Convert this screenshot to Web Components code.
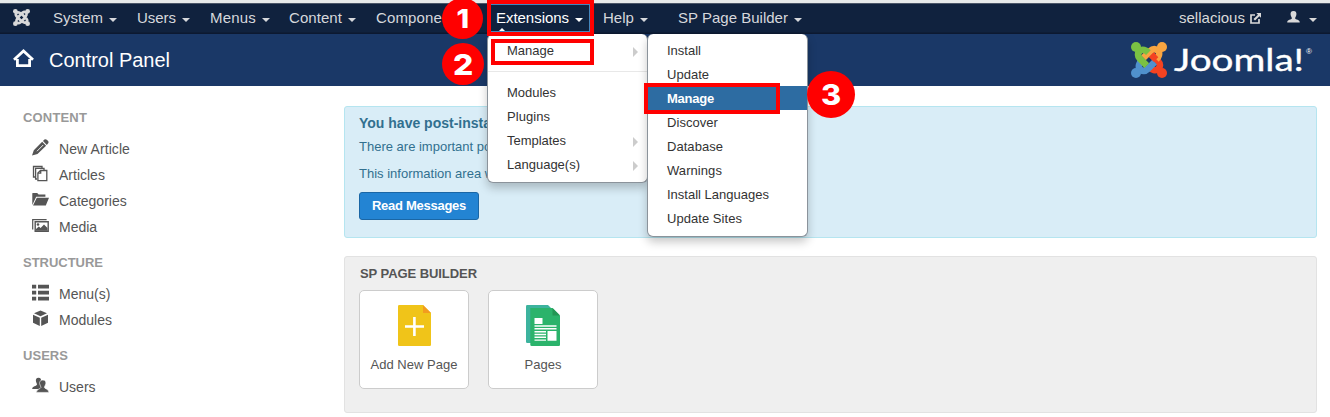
<!DOCTYPE html>
<html lang="en"><head><meta charset="utf-8"><title>Control Panel</title>
<style>html,body{margin:0;height:417px;overflow:hidden;background:#fff;font-family:"Liberation Sans",Arial,sans-serif}</style></head>
<body><control-panel></control-panel>
<script>
const define=(name,html,setup)=>customElements.define(name,class extends HTMLElement{
  connectedCallback(){
    if(this.shadowRoot)return;
    this.attachShadow({mode:'open'}).innerHTML=html;
    if(setup)setup(this,this.shadowRoot);
  }
});

// Spreads a label's letters over the width in its w attribute.
define('fit-text','<style>:host{display:inline-block;white-space:nowrap;flex:none}</style><slot></slot>',el=>{
  const w=+el.getAttribute('w');
  if(!w)return;
  el.style.letterSpacing=(w-el.getBoundingClientRect().width)/el.textContent.length+'px';
});

const hook='<path fill="none" stroke-width="6.6" d="M17.4 10.6C15 8.2 11.4 6.8 8.8 8.8C6.4 11.4 6.4 14.2 8.8 16.6L15.8 23.6"/><circle cx="5" cy="5" r="5" stroke="none"/>';
const mark=(c)=>[2,3,1,0].map(i=>`<g stroke="${c[i]}" fill="${c[i]}" transform="rotate(${i*90} 18 18)">${hook}</g>`).join('')+
  `<path d="M20.4 12.9L25 17.5" stroke="${c[2]}" stroke-width="6.6"/>`;
const glyphs={
  joomla:['0 0 36 36',mark(['#7ac143','#f9a541','#f44321','#5091cd'])],
  mini:['0 0 36 36','<g fill="none" stroke="currentColor" stroke-width="5.6"><path d="M17.5 11.2C15 7.6 10 5.8 7.4 8.4C5 11 5.6 13.4 8 15.9L20 28M24.8 17.5C28.4 15 30.2 10 27.6 7.4C25 5 22.6 5.6 20.1 8L8 20M18.5 24.8C21 28.4 26 30.2 28.6 27.6C31 25 30.4 22.6 28 20.1L16 8M11.2 18.5C7.6 21 5.8 26 8.4 28.6C11 31 13.4 30.4 15.9 28L28 16"/></g><g fill="currentColor"><circle cx="5" cy="5" r="5"/><circle cx="31" cy="5" r="5"/><circle cx="5" cy="31" r="5"/><circle cx="31" cy="31" r="5"/></g>'],
  home:['0 0 21 18','<path d="M1 10.8L10.5 2L20 10.8M4.4 10V16.6H16.6V10" fill="none" stroke="currentColor" stroke-width="2.8"/>'],
  out:['0 0 11 11','<path d="M5 2H1V10H9V6" fill="none" stroke="currentColor" stroke-width="1.7"/><path d="M3.5 6L8 1.8L6.3 0H11V4.8L9.4 3.2L5 7.5Z" fill="currentColor"/>'],
  person:['0 0 13 12','<path fill="currentColor" d="M6.5 0C9 0 9.6 1.8 9.4 3.6C9.2 5.4 8.2 6.3 8.1 7.5C8.4 8.5 13 8.5 12.8 11.5H.2C0 8.5 4.6 8.5 4.9 7.5C4.8 6.3 3.8 5.4 3.6 3.6C3.4 1.8 4 0 6.5 0Z"/>'],
  pencil:['0 0 17 17','<path fill="currentColor" d="M0 16.5L1.8 11.2L10.2 2.8L14.1 6.7L5.5 15L0 16.5ZM11 2L12.4.6Q13.6-.2 14.8.8L16.1 2.1Q17 3.2 16 4.6L14.8 5.9Z"/><path d="M5 12.2L11.2 6" stroke="#fff" stroke-width=".9"/>'],
  copy:['0 0 17 17','<g fill="none" stroke="currentColor" stroke-width="1.3"><path d="M3.2 12H1.5V1.5H10V3M5 14H3.6V3.4H12V5"/><path fill="#fff" d="M8.5 5.5H14.8V15.7H5.9V8.1Z"/><path d="M8.7 5.5V8.2H5.9"/></g>'],
  folder:['0 0 17 17','<path fill="currentColor" d="M.3 14V2.5Q.3 2 .8 2H5.2L6.6 3.5H13.4V5.8H4.2ZM4.8 6.7H17L13.8 14.6H1Z"/>'],
  image:['0 0 17 17','<path d="M.7 12.5V2.6H14.6" fill="none" stroke="currentColor" stroke-width="1.2"/><path d="M3.2 4.7H16.2V14.2H3.2Z" fill="none" stroke="currentColor" stroke-width="1.4"/><circle cx="6" cy="7.5" r="1.3" fill="currentColor"/><path fill="currentColor" d="M4 13.8V12L6.8 9.5L8.6 11L12 7.5L15.5 11V13.8Z"/>'],
  list:['0 0 17 17','<path fill="currentColor" d="M0 .8H4.2V4.6H0ZM6 .8H17V4.6H6ZM0 6.8H4.2V10.6H0ZM6 6.8H17V10.6H6ZM0 12.8H4.2V16.6H0ZM6 12.8H17V16.6H6Z"/>'],
  cube:['0 0 17 17','<path fill="currentColor" d="M8.5.5L15 3.2L8.5 6.3L2 3.2ZM1 4.7L7.8 7.7V16L1 12.8ZM16 4.7L9.2 7.7V16L16 12.8Z"/>'],
  users:['0 0 17 17','<path fill="currentColor" d="M6.5.8C8.8.8 9.2 2.2 9 4C8.8 5.6 7.8 6.5 7.9 7.6L9 8.8V12H.2C.2 9.4 4.7 9.2 5 7.6C5 6.5 4.1 5.6 3.9 4C3.8 2.2 4.2.8 6.5.8Z"/><path stroke="#fff" stroke-width=".6" fill="currentColor" d="M10.7 3.1C13.6 3.1 14 5 13.8 6.7C13.5 8.3 12.5 9.2 12.4 10.4C12.6 11.9 17 12 16.9 15.4H4.4C4.3 12 8.8 11.9 9 10.4C8.9 9.2 7.9 8.3 7.6 6.7C7.4 5 7.9 3.1 10.7 3.1Z"/>'],
  add:['0 0 33 41','<path fill="#f0c419" d="M1.3 0H25L33 8V39.7Q33 41 31.7 41H1.3Q0 41 0 39.7V1.3Q0 0 1.3 0Z"/><path fill="#f29c1f" d="M25 0L33 8H25Z"/><path d="M16.4 12V31M7 21.5H26" stroke="#fff" stroke-width="2.6"/>'],
  pages:['0 0 34 41','<path fill="#3db39e" d="M1.3 0H22L27 5V38H1.3Q0 38 0 36.7V1.3Q0 0 1.3 0Z"/><path fill="#2bb36b" d="M4.5 3H26.5L34 10.5V39.7Q34 41 32.7 41H5.7Q4.3 41 4.3 39.7V3Z"/><path fill="#239655" d="M26.5 3L34 10.5H26.5Z"/><path fill="#fff" d="M8.5 13H16.5V19H8.5ZM8.5 20.3H30.5V21.7H8.5ZM8.5 23H30.5V24.4H8.5ZM8.5 26H20V27.4H8.5ZM8.5 28.8H20V30.2H8.5ZM8.5 31.6H20V33H8.5ZM8.5 34.4H20V35.8H8.5ZM21.5 26H30.5V35.8H21.5Z"/>']
};
define('ui-icon','<style>:host{display:block;flex:none}svg{display:block;width:100%;height:100%}</style><svg></svg>',(el,r)=>{
  const [box,body]=glyphs[el.getAttribute('name')],s=r.querySelector('svg');
  s.setAttribute('viewBox',box);s.innerHTML=body;
});

define('nav-item',`<style>:host{display:flex;align-items:center;flex:none;box-sizing:border-box;height:30px;font-size:15px;line-height:18px;color:#d6d8dc}
:host([active]){color:#fff}i{border:4px solid transparent;border-top-color:currentColor;border-bottom:0;margin:3px 0 0 6px}</style><slot></slot><i></i>`);

define('top-bar',`<style>:host{display:flex;box-sizing:border-box;height:34px;border-top:3px solid #e7eaea;border-bottom:1px solid #0c1931;background:#10223e;box-shadow:inset 0 1px #4b5668,inset 0 -1px #0e1d36;align-items:center;color:#d9d9d9;font-size:15px;line-height:18px}
nav{display:flex;margin:0 0 0 23px}.end{display:flex;align-items:center;margin:0 0 0 auto;padding-right:13px}
.mini{width:17px;height:17px;margin:-2px 0 0 13px}.out{width:11px;height:11px;margin:0 26px 0 5px}.person{width:13px;height:12px;margin-top:-3px}b{border:4px solid transparent;border-top-color:currentColor;border-bottom:0;margin:3px 0 0 9px}</style>
<ui-icon class="mini" name="mini"></ui-icon><nav>
<nav-item style="width:84px"><fit-text w="50">System</fit-text></nav-item><nav-item style="width:73px"><fit-text w="39">Users</fit-text></nav-item>
<nav-item style="width:79px"><fit-text w="46">Menus</fit-text></nav-item><nav-item style="width:87px"><fit-text w="53">Content</fit-text></nav-item>
<nav-item style="width:120px"><fit-text w="66">Compone</fit-text></nav-item><nav-item active style="width:107px"><fit-text w="73">Extensions</fit-text></nav-item>
<nav-item style="width:75px"><fit-text w="31">Help</fit-text></nav-item><nav-item><fit-text w="110">SP Page Builder</fit-text></nav-item></nav>
<div class="end"><fit-text w="66">sellacious</fit-text><ui-icon class="out" name="out"></ui-icon><ui-icon class="person" name="person"></ui-icon><b></b></div>`);

define('page-header',`<style>:host{display:flex;height:52px;background:#1a3867;color:#fff;align-items:center;padding:0 18px 0 13px}
.home{width:21px;height:18px;margin:-4px 15px 0 0}h1{font:20px "Liberation Sans",sans-serif;margin:0}.brand{display:flex;margin-left:auto;height:36px;align-items:center}
.mark{width:36px;height:36px}.word{width:134px;height:36px;margin-left:5px;display:block;overflow:visible}.reg{font-size:8px;line-height:8px;align-self:flex-start;margin:6px 0 0 0;width:6px;white-space:nowrap}</style>
<ui-icon class="home" name="home"></ui-icon><h1><fit-text w="121">Control Panel</fit-text></h1>
<div class="brand"><ui-icon class="mark" name="joomla"></ui-icon><svg class="word" viewBox="0 0 134 36"><text x="2" y="29" fill="#fff" stroke="#fff" stroke-width=".35" font-family="Lato,sans-serif" font-size="31" textLength="130" lengthAdjust="spacingAndGlyphs">Joomla!</text></svg><span class="reg">®</span></div>`);

define('side-link',`<style>:host{display:flex;height:26px;align-items:center;padding-left:9px;font-size:14px;color:#555}ui-icon{width:17px;height:17px;margin:-3px 10px 0 0}</style><slot></slot>`,
(el,r)=>{const i=document.createElement('ui-icon');i.setAttribute('name',el.getAttribute('icon'));r.insertBefore(i,r.querySelector('slot'))});
define('side-group',`<style>:host{display:block}h2{font:bold 13px/18px "Liberation Sans",sans-serif;color:#999;margin:0 0 9px}</style><h2></h2><slot></slot>`,
(el,r)=>{const f=document.createElement('fit-text');f.textContent=el.getAttribute('label');f.setAttribute('w',el.getAttribute('w'));r.querySelector('h2').append(f)});
define('side-bar',`<style>:host{display:flex;flex-direction:column;gap:14px;width:321px;flex:none}</style>
<side-group label="CONTENT" w="64"><side-link icon="pencil"><fit-text w="71">New Article</fit-text></side-link><side-link icon="copy">Articles</side-link><side-link icon="folder">Categories</side-link><side-link icon="image">Media</side-link></side-group>
<side-group label="STRUCTURE" w="80"><side-link icon="list">Menu(s)</side-link><side-link icon="cube">Modules</side-link></side-group>
<side-group label="USERS" w="45"><side-link icon="users">Users</side-link></side-group>`);

define('message-box',`<style>:host{display:block;box-sizing:border-box;height:132px;background:#d9edf7;border:1px solid #b5e5f0;border-radius:3px;padding:6px 14px;color:#31708f;font-size:13px}
h3{font:bold 14px/20px "Liberation Sans",sans-serif;margin:0}p{margin:0 0 9px;line-height:18px}p:first-of-type{margin-top:5px}
button{display:flex;align-items:center;justify-content:center;box-sizing:border-box;width:120px;height:28px;border:1px solid #1a66a5;border-radius:3px;background:#2384d3;color:#fff;font:bold 13px "Liberation Sans",sans-serif;padding:0 0 1px;margin:0}</style>
<h3>You have post-insta</h3><p>There are important po</p><p>This information area w</p><button><fit-text w="94">Read Messages</fit-text></button>`);

define('quick-card',`<style>:host{display:flex;flex-direction:column;align-items:center;box-sizing:border-box;width:110px;height:99px;border:1px solid #ccc;border-radius:5px;background:#fff;padding-top:14px;gap:11px;font-size:13px;line-height:16px;color:#555}</style><slot name="icon"></slot><slot></slot>`);
define('quick-panel',`<style>:host{display:block;box-sizing:border-box;height:157px;background:#efefef;border:1px solid #e2e2e2;border-radius:3px;margin-top:18px;padding:8px 14px}
h3{font:bold 13px/18px "Liberation Sans",sans-serif;color:#555;margin:0 0 7px 1px}div{display:flex;gap:19px}</style>
<h3><fit-text w="117">SP PAGE BUILDER</fit-text></h3><div><quick-card><ui-icon slot="icon" name="add" style="width:33px;height:41px"></ui-icon><fit-text w="87">Add New Page</fit-text></quick-card>
<quick-card><ui-icon slot="icon" name="pages" style="width:34px;height:41px"></ui-icon><fit-text w="37">Pages</fit-text></quick-card></div>`);

define('menu-row',`<style>:host{display:flex;align-items:center;justify-content:space-between;height:24px;padding:0 9px 0 19px;font-size:13px;color:#333}
:host([on]){background:#2d6ca2;color:#fff;font-weight:bold}i{display:none}:host([more]) i{display:block;border:5px solid transparent;border-left-color:#ccc;border-right:0;margin-top:3px}</style><slot></slot><i></i>`);
define('drop-menu',`<style>:host{display:block;position:absolute;top:34px;width:160px;box-sizing:border-box;background:#fff;border:1px solid #8b939b;border-top:0;border-radius:6px;padding:4px 0 6px;box-shadow:0 5px 10px rgba(0,0,0,.22)}</style><slot></slot>`);
define('step-badge',`<style>:host{position:absolute;display:flex;align-items:center;justify-content:center;background:#f00;border-radius:50%;color:#fff;font-family:Inter,sans-serif;font-weight:800}span{transform:scaleX(1.1)}</style><span><slot></slot></span>`);
define('mark-frame',`<style>:host{position:absolute;box-sizing:border-box;border:4px solid #f00}</style>`);

define('control-panel',`<style>:host{display:block;position:relative;width:1330px;height:417px;overflow:hidden}main{display:flex;padding:20px 13px 0 23px}section{flex:1}side-bar{margin-top:3px}
hr{border:0;border-top:1px solid #e8e8e8;margin:9px 0 8px}.tip{position:absolute;left:497px;top:28px;border:5px solid transparent;border-bottom-color:#fff;border-top:0}
.glow{position:absolute;left:491px;top:4px;width:99px;height:28px;box-sizing:border-box;border:1px solid #4386bd;border-left:0}</style>
<top-bar></top-bar><page-header></page-header><main><side-bar></side-bar><section><message-box></message-box><quick-panel></quick-panel></section></main>
<drop-menu style="left:487px;width:161px"><menu-row more><fit-text w="47">Manage</fit-text></menu-row><hr><menu-row><fit-text w="49">Modules</fit-text></menu-row><menu-row><fit-text w="43">Plugins</fit-text></menu-row><menu-row more><fit-text w="59">Templates</fit-text></menu-row><menu-row more><fit-text w="73">Language(s)</fit-text></menu-row></drop-menu>
<drop-menu style="left:647px;width:161px"><menu-row><fit-text w="34">Install</fit-text></menu-row><menu-row><fit-text w="42">Update</fit-text></menu-row><menu-row on><fit-text w="47">Manage</fit-text></menu-row><menu-row><fit-text w="51">Discover</fit-text></menu-row><menu-row><fit-text w="56">Database</fit-text></menu-row><menu-row><fit-text w="55">Warnings</fit-text></menu-row><menu-row><fit-text w="102">Install Languages</fit-text></menu-row><menu-row><fit-text w="75">Update Sites</fit-text></menu-row></drop-menu>
<div class="tip"></div><div class="glow"></div>
<mark-frame style="left:487px;top:0;width:107px;height:36px"></mark-frame><mark-frame style="left:491px;top:39px;width:103px;height:26px"></mark-frame><mark-frame style="left:644px;top:83px;width:136px;height:31px"></mark-frame>
<step-badge style="left:442px;top:-2px;width:41px;height:41px;font-size:26px">1</step-badge><step-badge style="left:442px;top:43px;width:42px;height:42px;font-size:29px">2</step-badge><step-badge style="left:807px;top:71px;width:48px;height:47px;font-size:28px">3</step-badge>`);
</script></body></html>
